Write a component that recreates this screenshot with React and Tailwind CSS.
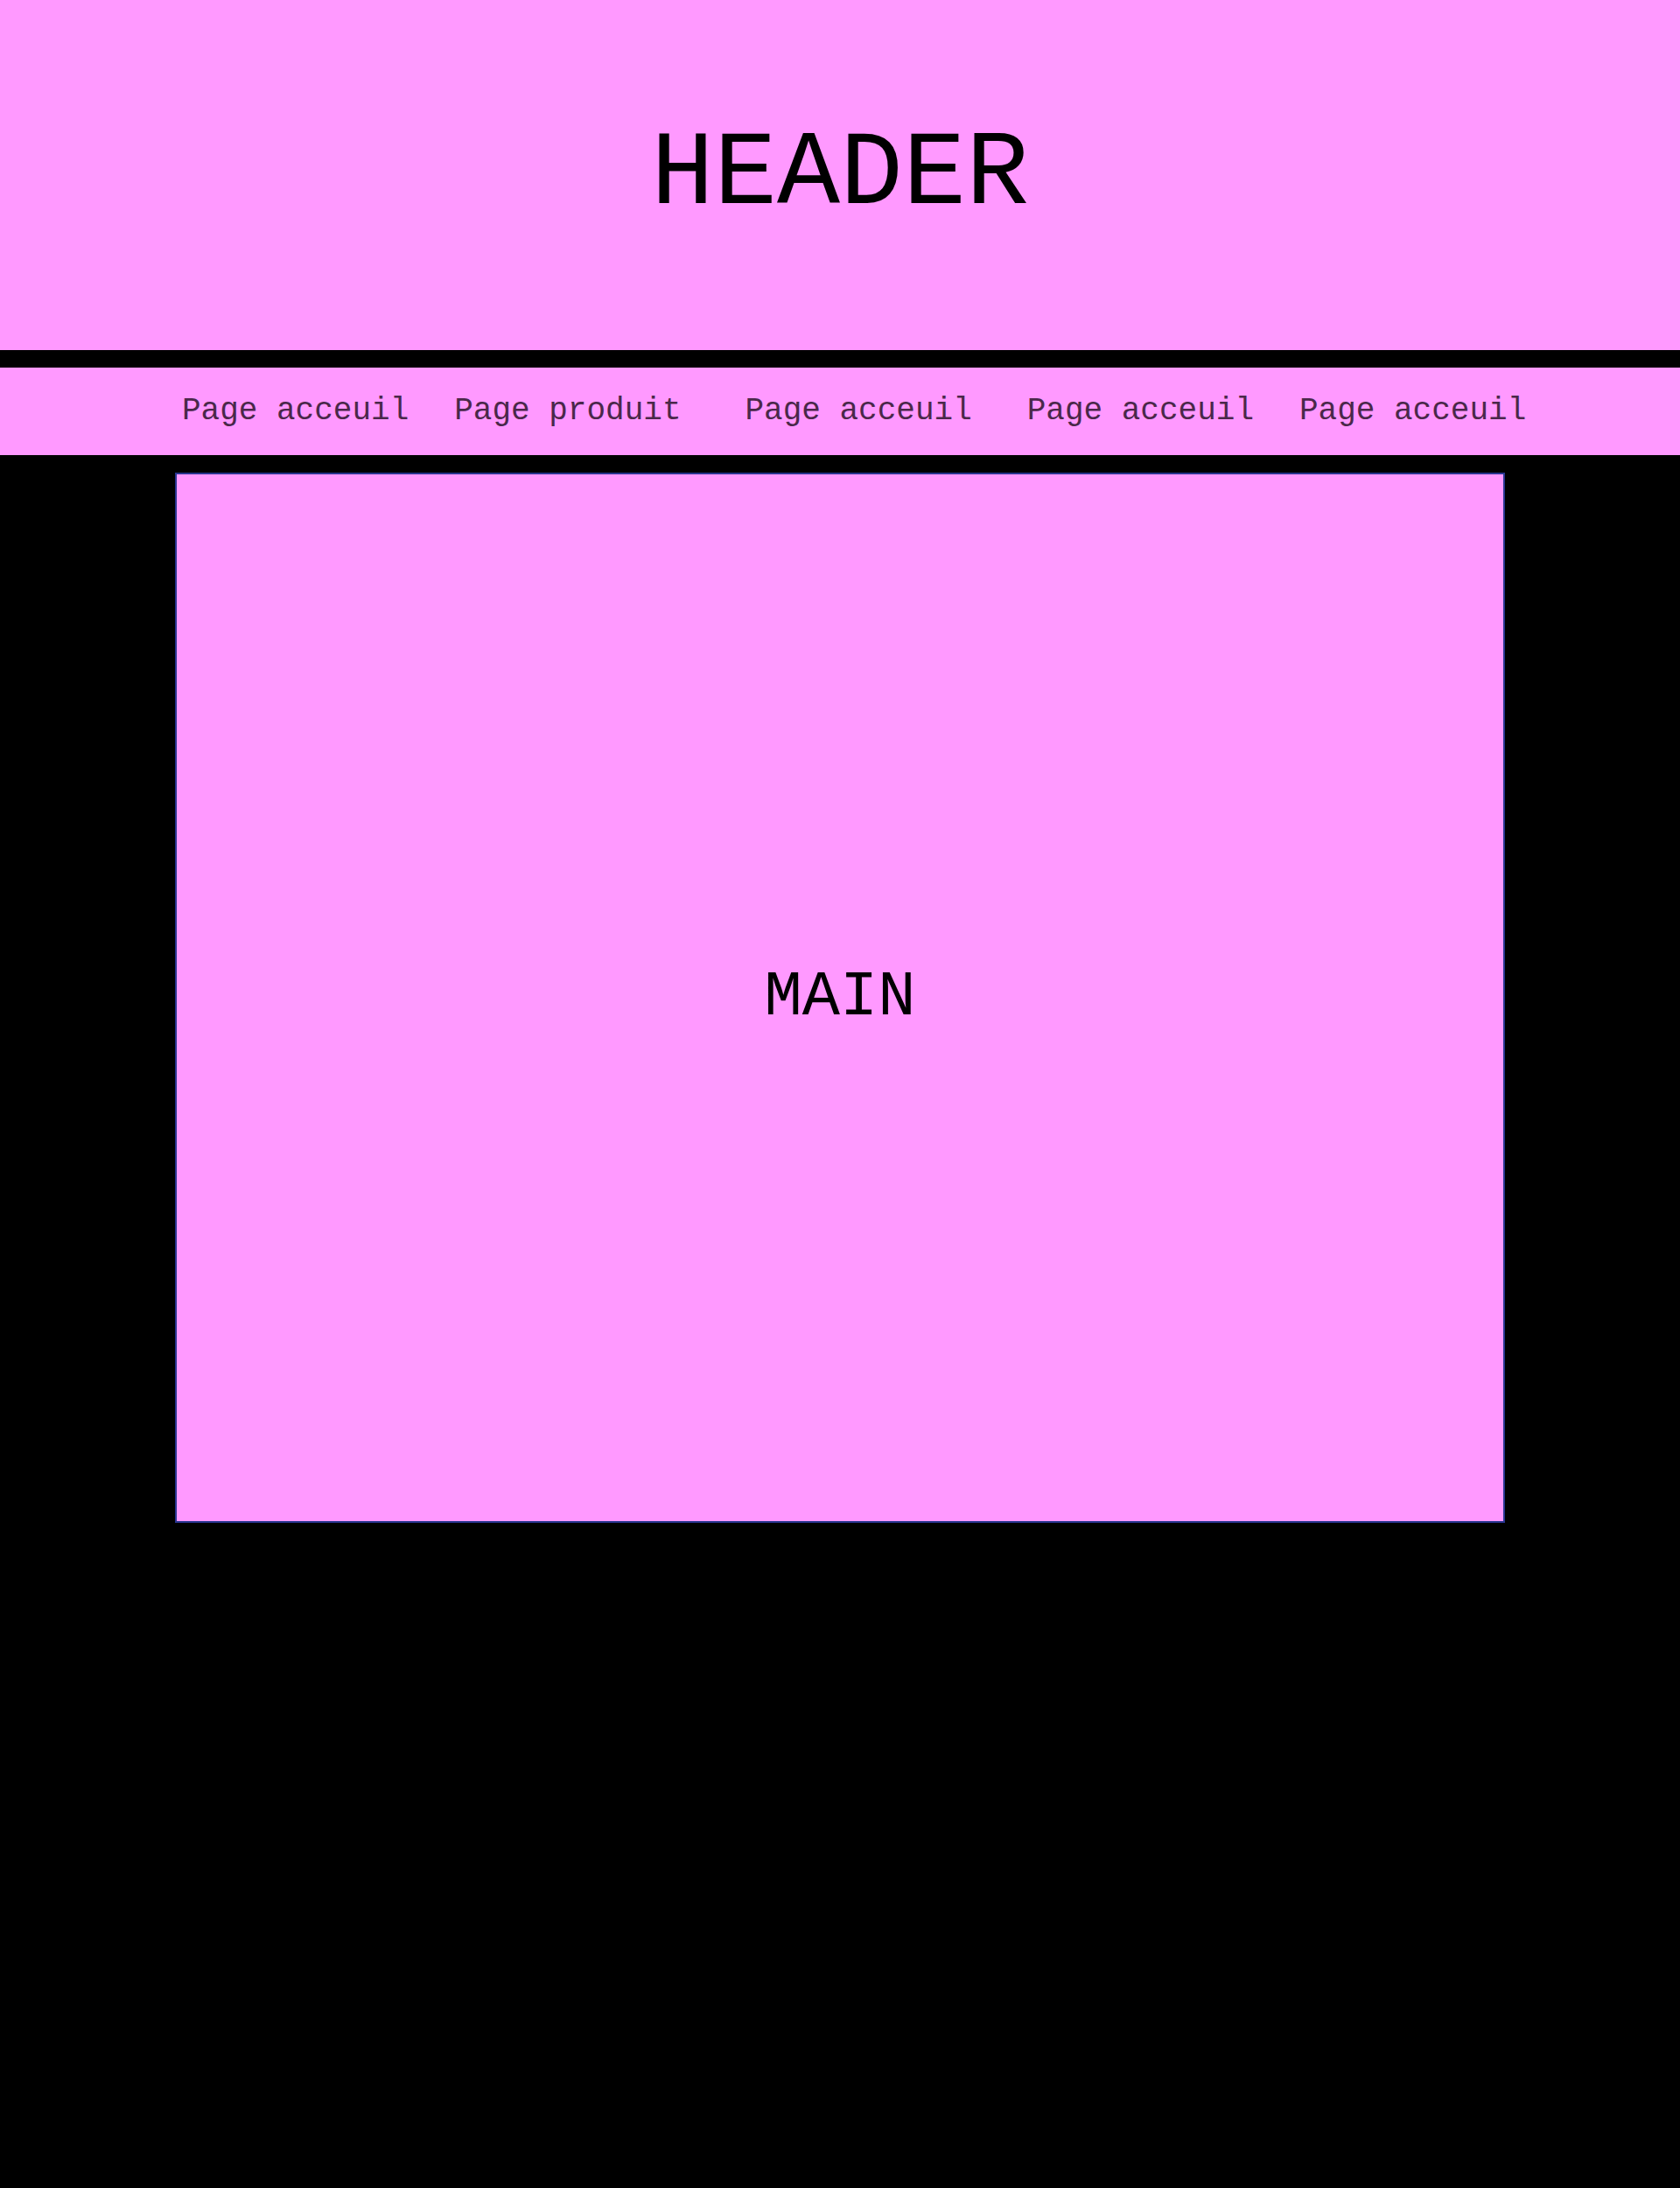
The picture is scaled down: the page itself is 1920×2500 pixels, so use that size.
import React from "react";

const mono = { fontFamily: '"Courier New", Courier, "Liberation Mono", monospace' };

const links = [
  { label: "Page acceuil", cls: "" },
  { label: "Page produit", cls: "ml-[52px]" },
  { label: "Page acceuil", cls: "ml-[73px]" },
  { label: "Page acceuil", cls: "ml-[63px]" },
  { label: "Page acceuil", cls: "ml-[52px]" },
];

const App = () => {
  return (
    <div className="min-h-screen bg-black" style={mono}>
      <header className="h-[400px] bg-[#ff99ff] flex items-center justify-center">
        <h1 className="text-[120px] text-black font-normal">HEADER</h1>
      </header>

      <nav className="mt-[20px] h-[100px] bg-[#ff99ff] flex items-center pl-[208px]">
        {links.map((link, index) => (
          <a key={index} href="#" className={`text-[36px] text-[#4a284a] ${link.cls}`}>
            {link.label}
          </a>
        ))}
      </nav>

      <main className="mt-[20px] mx-[200px] h-[1200px] bg-[#ff99ff] border-2 border-[#28358f] flex items-center justify-center">
        <p className="text-[72px] text-black">MAIN</p>
      </main>
    </div>
  );
};

export default App;
